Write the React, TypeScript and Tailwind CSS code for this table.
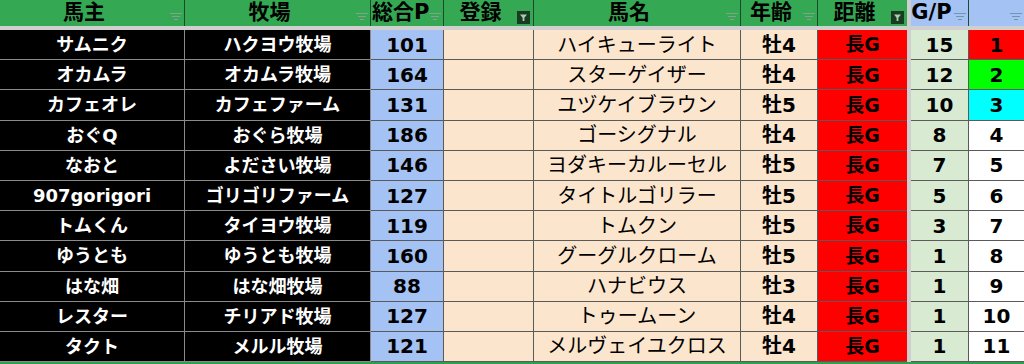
import clsx from "clsx";

type Row = {
  owner: string;
  farm: string;
  total: number;
  horse: string;
  age: string;
  gp: number;
  rank: number;
  rankBg: string;
};

const rows: Row[] = [
  { owner: "サムニク", farm: "ハクヨウ牧場", total: 101, horse: "ハイキューライト", age: "牡4", gp: 15, rank: 1, rankBg: "bg-[#ff0000]" },
  { owner: "オカムラ", farm: "オカムラ牧場", total: 164, horse: "スターゲイザー", age: "牡4", gp: 12, rank: 2, rankBg: "bg-[#00ff00]" },
  { owner: "カフェオレ", farm: "カフェファーム", total: 131, horse: "ユヅケイブラウン", age: "牡5", gp: 10, rank: 3, rankBg: "bg-[#00ffff]" },
  { owner: "おぐQ", farm: "おぐら牧場", total: 186, horse: "ゴーシグナル", age: "牡4", gp: 8, rank: 4, rankBg: "bg-white" },
  { owner: "なおと", farm: "よださい牧場", total: 146, horse: "ヨダキーカルーセル", age: "牡5", gp: 7, rank: 5, rankBg: "bg-white" },
  { owner: "907gorigori", farm: "ゴリゴリファーム", total: 127, horse: "タイトルゴリラー", age: "牡5", gp: 5, rank: 6, rankBg: "bg-white" },
  { owner: "トムくん", farm: "タイヨウ牧場", total: 119, horse: "トムクン", age: "牡5", gp: 3, rank: 7, rankBg: "bg-white" },
  { owner: "ゆうとも", farm: "ゆうとも牧場", total: 160, horse: "グーグルクローム", age: "牡5", gp: 1, rank: 8, rankBg: "bg-white" },
  { owner: "はな畑", farm: "はな畑牧場", total: 88, horse: "ハナビウス", age: "牡3", gp: 1, rank: 9, rankBg: "bg-white" },
  { owner: "レスター", farm: "チリアド牧場", total: 127, horse: "トゥームーン", age: "牡4", gp: 1, rank: 10, rankBg: "bg-white" },
  { owner: "タクト", farm: "メルル牧場", total: 121, horse: "メルヴェイユクロス", age: "牡4", gp: 1, rank: 11, rankBg: "bg-white" },
];

// the little three-line filter button in sheet headers
const FilterIcon = ({ color }: { color: string }) => (
  <svg width="12" height="8" viewBox="0 0 12 8" className="absolute right-[2px] bottom-[5px]">
    <rect x="0" y="0" width="12" height="1" fill={color} />
    <rect x="2" y="3" width="8" height="1" fill={color} />
    <rect x="4" y="6" width="4" height="1" fill={color} />
  </svg>
);

// filter that has a condition set: dark square with funnel
const ActiveFilter = () => (
  <svg width="13" height="13" viewBox="0 0 13 13" className="absolute right-[3px] top-[11px]">
    <rect width="13" height="13" fill="#1b3a24" />
    <path d="M3 3.5h7l-2.6 3.2v3.3h-1.8v-3.3z" fill="#a3d3a6" />
  </svg>
);

const Head = ({
  w,
  label,
  blue,
  active,
}: {
  w: string;
  label?: string;
  blue?: boolean;
  active?: boolean;
}) => (
  <div
    className={clsx(
      "relative h-full flex items-center justify-center pr-[16px] border-r border-[#1d4a2b] text-[21px] font-bold text-black whitespace-nowrap",
      w,
      blue ? "bg-[#a4c2f4]" : "bg-[#35a853]"
    )}
  >
    {label}
    {active ? <ActiveFilter /> : <FilterIcon color={blue ? "#6f97a8" : "#86a08f"} />}
  </div>
);

export default function App() {
  return (
    <div className="w-[1024px] h-[364px] overflow-hidden bg-[#2e9e4f] font-['DejaVu_Sans','Noto_Sans_CJK_JP',sans-serif]">
      {/* header */}
      <div className="flex h-[26px]">
        <Head w="w-[185px]" label="馬主" />
        <Head w="w-[186px]" label="牧場" />
        <div className="relative h-full w-[73px] flex items-center pl-[1px] border-r border-[#1d4a2b] bg-[#35a853] text-[21px] font-bold text-black whitespace-nowrap">
          総合P
          <FilterIcon color="#86a08f" />
        </div>
        <Head w="w-[90px]" label="登録" active />
        <Head w="w-[207px]" label="馬名" />
        <Head w="w-[77px]" label="年齢" />
        <div className="relative h-full w-[89px] flex items-center justify-center pr-[16px] bg-[#35a853] text-[21px] font-bold text-black">
          距離
          <ActiveFilter />
        </div>
        <div className="w-[4px] h-full bg-[#cfcfcf]" />
        <Head w="w-[58px]" label="G/P" blue />
        <div className="relative h-full w-[55px] bg-[#a4c2f4]">
          <FilterIcon color="#6f97a8" />
        </div>
      </div>
      <div className="h-[4px] bg-[#cfcfcf]" />

      {/* body */}
      <div className="flex flex-col">
        {rows.map((r) => (
          <div key={r.rank} className="flex h-[30.2px] text-black">
            <div className="w-[185px] flex items-center justify-center bg-black text-white text-[18px] font-bold border-r border-b border-[#8a8a8a]">
              {r.owner}
            </div>
            <div className="w-[186px] flex items-center justify-center bg-black text-white text-[18px] font-bold border-r border-b border-[#8a8a8a]">
              {r.farm}
            </div>
            <div className="w-[73px] flex items-center justify-center bg-[#a4c2f4] text-[20px] font-bold border-r border-b border-[#5a5a5a]">
              {r.total}
            </div>
            <div className="w-[90px] bg-[#fce5cd] border-r border-b border-[#5a5a5a]" />
            <div className="w-[207px] flex items-center justify-center bg-[#fce5cd] text-[20px] border-r border-b border-[#5a5a5a]">
              {r.horse}
            </div>
            <div className="w-[77px] flex items-center justify-center bg-[#fce5cd] text-[20px] font-bold border-r border-b border-[#5a5a5a]">
              {r.age}
            </div>
            <div className="w-[89px] flex items-center justify-center bg-[#ff0000] text-[19px] font-bold border-b border-[#5a5a5a]">
              長G
            </div>
            <div className="w-[4px] bg-[#cfcfcf]" />
            <div className="w-[58px] flex items-center justify-center bg-[#d9ead3] text-[20px] font-bold border-r border-b border-[#5a5a5a]">
              {r.gp}
            </div>
            <div className={clsx("w-[55px] flex items-center justify-center text-[20px] font-bold border-b border-[#5a5a5a]", r.rankBg)}>
              {r.rank}
            </div>
          </div>
        ))}
      </div>
    </div>
  );
}
